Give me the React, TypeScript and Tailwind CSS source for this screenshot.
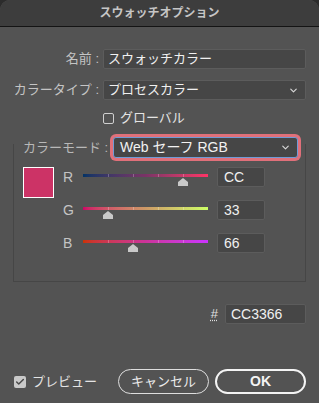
import React from 'react';
import { ChevronDown, Check } from 'lucide-react';

const Thumb: React.FC<{ left: string }> = ({ left }) => (
  <svg
    className="absolute top-[4px] -translate-x-1/2"
    style={{ left }}
    width="10"
    height="8"
    viewBox="0 0 10 8"
  >
    <path d="M5 0 L10 4 L10 8 L0 8 L0 4 Z" fill="#c9c9c9" />
  </svg>
);

const Ticks: React.FC = () => (
  <>
    <div className="absolute left-[20%] top-0 h-full w-px bg-white/25" />
    <div className="absolute left-[40%] top-0 h-full w-px bg-white/25" />
    <div className="absolute left-[60%] top-0 h-full w-px bg-white/25" />
    <div className="absolute left-[80%] top-0 h-full w-px bg-white/25" />
  </>
);

const SliderRow: React.FC<{ label: string; value: string; track: string; pos: string }> = ({ label, value, track, pos }) => (
  <div className="flex items-center h-[20px]">
    <div className="w-[20px] text-[14px] text-[#c4c4c4] leading-none">{label}</div>
    <div className={`relative w-[125px] h-[3px] -mt-[3px] ${track}`}>
      <Ticks />
      <Thumb left={pos} />
    </div>
    <div className="ml-[9px] w-[48px] h-[20px] bg-[#464646] border border-[#5c5c5c] rounded-[2px] text-[14px] text-[#f0f0f0] pl-[6px] leading-[18px]">
      {value}
    </div>
  </div>
);

export default function App() {
  return (
    <div className="w-[319px] h-[403px] bg-[#2c2c2c] font-['Liberation_Sans','Noto_Sans_CJK_JP',sans-serif]">
      <div className="w-full h-full bg-[#535353] rounded-t-[10px] overflow-hidden flex flex-col">
        <div className="h-[27px] shrink-0 bg-[#3d3d3d] border-b border-[#141414] flex items-center justify-center">
          <span className="text-[12px] font-bold text-[#c6c6c6] leading-none">スウォッチオプション</span>
        </div>

        <div className="px-[13px] flex flex-col">
          <div className="mt-[22px] flex items-center">
            <div className="w-[90px] pr-[4px] text-right text-[13px] text-[#c4c4c4]">名前 :</div>
            <div className="w-[203px] h-[20px] bg-[#464646] border border-[#5c5c5c] rounded-[2px] pl-[4px] text-[13px] text-[#f0f0f0] leading-[18px]">
              スウォッチカラー
            </div>
          </div>

          <div className="mt-[11px] flex items-center">
            <div className="w-[90px] pr-[4px] text-right text-[13px] text-[#c4c4c4] whitespace-nowrap">カラータイプ :</div>
            <div className="w-[203px] h-[20px] bg-[#464646] border border-[#5c5c5c] rounded-[2px] pl-[4px] pr-[6px] flex items-center justify-between text-[13px] text-[#f0f0f0]">
              <span>プロセスカラー</span>
              <ChevronDown size={11} strokeWidth={2.5} className="text-[#d8d8d8]" />
            </div>
          </div>

          <div className="mt-[11px] ml-[90px] flex items-center gap-[6px] h-[14px]">
            <div className="w-[11px] h-[11px] border border-[#cfcfcf] rounded-[2px]" />
            <span className="text-[13px] text-[#e4e4e4]">グローバル</span>
          </div>

          <div className="mt-[19px] border-l border-r border-b border-[#464646] flex flex-col">
            <div className="-mt-[7px] flex items-center h-[21px]">
              <div className="ml-[9px] w-[90px] text-[13px] text-[#b8b8b8] whitespace-nowrap">カラーモード :</div>
              <div className="w-[185px] h-[21px] bg-[#464646] border border-[#6f9bd6] rounded-[3px] ring-[3px] ring-[#e0707a] flex items-center justify-between pl-[6px] pr-[6px] text-[14px] text-[#f2f2f2]">
                <span>Web セーフ RGB</span>
                <ChevronDown size={11} strokeWidth={2.5} className="text-[#d8d8d8]" />
              </div>
            </div>

            <div className="mt-[9px] ml-[9px] flex">
              <div className="w-[31px] h-[31px] border border-white bg-[#cc3366]" />
              <div className="ml-[9px] flex flex-col gap-[13px]">
                <SliderRow label="R" value="CC" pos="80%" track="bg-linear-to-r from-[#003366] via-[#7a3366] to-[#ff3366]" />
                <SliderRow label="G" value="33" pos="20%" track="bg-linear-to-r from-[#cc0066] via-[#cc9966] to-[#ccff66]" />
                <SliderRow label="B" value="66" pos="40%" track="bg-linear-to-r from-[#cc3300] via-[#cc3399] to-[#cc33ff]" />
              </div>
            </div>
            <div className="h-[28px]" />
          </div>

          <div className="mt-[22px] flex items-center justify-end">
            <span className="text-[13px] text-[#e0e0e0] underline decoration-dotted underline-offset-2 mr-[7px]">#</span>
            <div className="w-[81px] h-[20px] bg-[#464646] border border-[#5c5c5c] rounded-[2px] pl-[5px] text-[14px] text-[#f0f0f0] leading-[18px]">
              CC3366
            </div>
          </div>

          <div className="mt-[45px] flex items-center">
            <div className="w-[12px] h-[12px] ml-[1px] bg-[#c9c9c9] rounded-[2px] flex items-center justify-center">
              <Check size={10} strokeWidth={3.5} className="text-[#4a4a4a]" />
            </div>
            <span className="ml-[6px] text-[13px] text-[#e4e4e4]">プレビュー</span>
            <div className="ml-auto flex gap-[6px]">
              <button className="w-[91px] h-[25px] rounded-full border-[1.5px] border-[#dedede] text-[13px] text-[#ececec]">
                キャンセル
              </button>
              <button className="w-[91px] h-[25px] rounded-full border-2 border-[#f4f4f4] text-[14px] font-bold text-[#f4f4f4]">
                OK
              </button>
            </div>
          </div>
        </div>
      </div>
    </div>
  );
}
